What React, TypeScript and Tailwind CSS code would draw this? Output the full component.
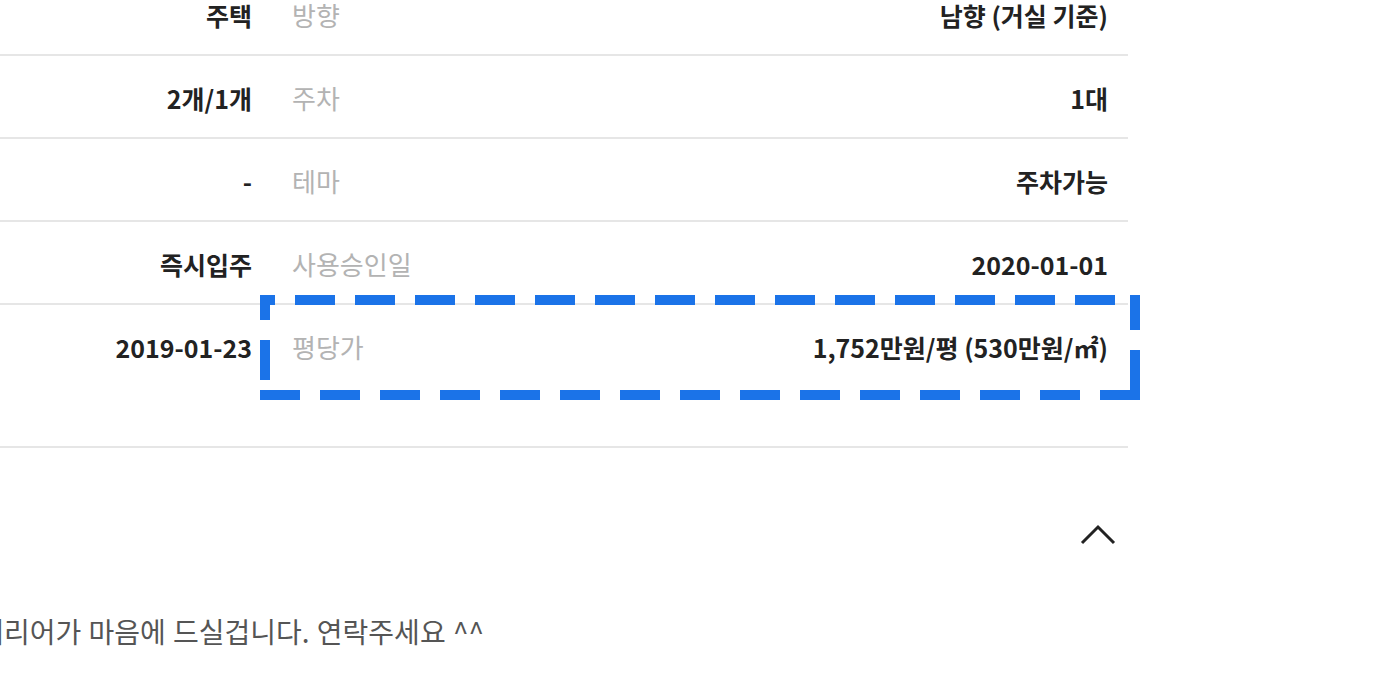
import React from "react";

const ROWS = [
  { left: "주택", label: "방향", value: "남향 (거실 기준)" },
  { left: "2개/1개", label: "주차", value: "1대" },
  { left: "-", label: "테마", value: "주차가능" },
  { left: "즉시입주", label: "사용승인일", value: "2020-01-01" },
  { left: "2019-01-23", label: "평당가", value: "1,752만원/평 (530만원/㎡)", tall: true },
];

const App: React.FC = () => {
  return (
    <div
      className="relative w-[1400px] h-[700px] overflow-hidden bg-white"
      style={{ fontFamily: '"Noto Sans CJK KR", "Noto Sans", sans-serif' }}
    >
      <div className="w-[1128px] -mt-[27px]">
        {ROWS.map((row) => (
          <div
            key={row.label}
            className={
              "flex items-start border-b-2 border-[#e6e6e6] pt-[27px] " +
              (row.tall ? "pb-[84px]" : "pb-[24px]")
            }
          >
            <div className="w-[252px] text-right text-[25px] leading-[30px] font-bold text-[#222]">
              {row.left}
            </div>
            <div className="ml-[40px] flex-1 text-[26px] leading-[30px] text-[#b3b3b3]">
              {row.label}
            </div>
            <div className="pr-[20px] text-right text-[25px] leading-[30px] font-bold text-[#222]">
              {row.value}
            </div>
          </div>
        ))}
      </div>

      <div className="w-[1128px] flex justify-end pr-[10px] pt-[76px]">
        <svg width="40" height="24" viewBox="0 0 40 24">
          <path d="M4 19 L20 3 L36 19" fill="none" stroke="#222" strokeWidth="3" />
        </svg>
      </div>

      <div className="mt-[68px] w-[484px] overflow-hidden flex justify-end whitespace-nowrap text-[28px] leading-[30px] text-[#555] [word-spacing:1px]">
        인테리어가 마음에 드실겁니다. 연락주세요 ^^
      </div>

      {/* highlight box */}
      <svg className="absolute left-0 top-0 pointer-events-none" width="1400" height="700">
        <g stroke="#1b73e8" strokeWidth="10" fill="none" strokeDasharray="40 20">
          <line x1="260" y1="300" x2="1140" y2="300" strokeDashoffset="25" />
          <line x1="265" y1="295" x2="265" y2="400" strokeDashoffset="15" />
          <line x1="260" y1="395" x2="1140" y2="395" />
          <line x1="1135" y1="295" x2="1135" y2="400" strokeDashoffset="5" />
        </g>
      </svg>
    </div>
  );
};

export default App;
